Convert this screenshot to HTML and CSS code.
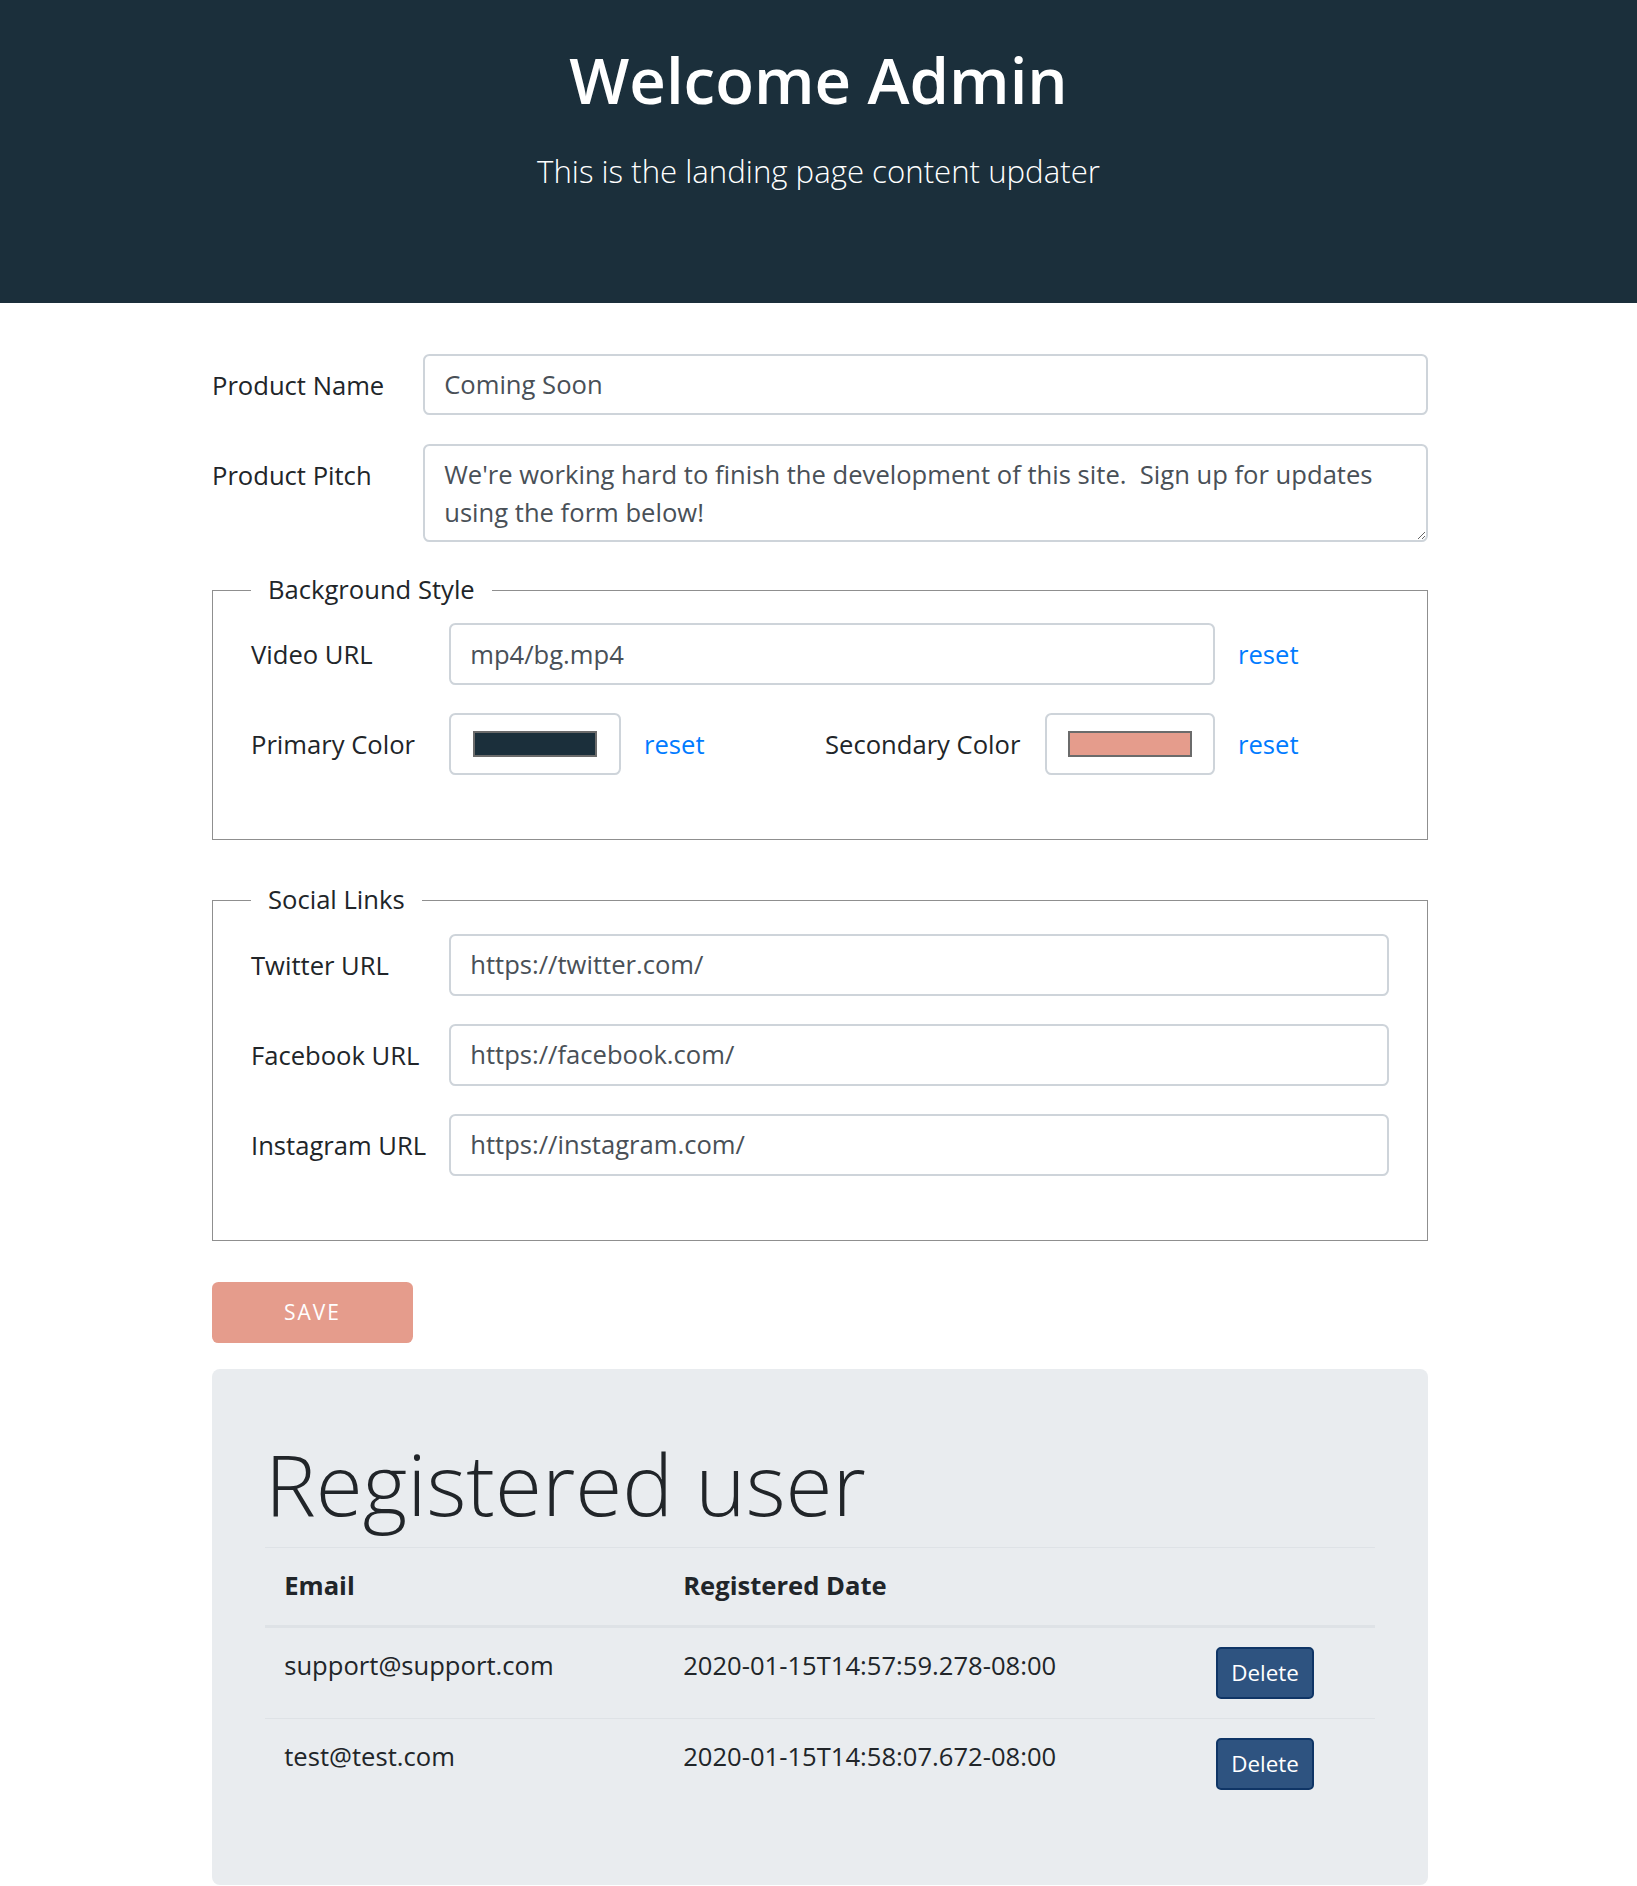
FILE: index.html
```html
<!DOCTYPE html>
<html lang="en">
<head>
<meta charset="utf-8">
<title>Admin</title>
<link rel="stylesheet" href="styles.css">
</head>
<body>
<header class="hero">
  <h1 class="hero-title">Welcome Admin</h1>
  <p class="hero-lead">This is the landing page content updater</p>
</header>
<main class="page">
  <form class="editor">
    <div class="form-row">
      <label class="form-label" for="name">Product Name</label>
      <input class="field" id="name" type="text" value="Coming Soon">
    </div>
    <div class="form-row">
      <label class="form-label" for="pitch">Product Pitch</label>
      <textarea class="field field-area" id="pitch" rows="2">We're working hard to finish the development of this site.  Sign up for updates using the form below!</textarea>
    </div>

    <fieldset class="group">
      <legend class="group-legend">Background Style</legend>
      <div class="bg-grid">
        <label class="form-label" for="video">Video URL</label>
        <input class="field field-tall span-video" id="video" type="text" value="mp4/bg.mp4">
        <a class="reset" href="#">reset</a>

        <span class="form-label">Primary Color</span>
        <div class="color-box"><span class="swatch swatch-primary"></span></div>
        <a class="reset" href="#">reset</a>
        <span class="form-label">Secondary Color</span>
        <div class="color-box"><span class="swatch swatch-secondary"></span></div>
        <a class="reset" href="#">reset</a>
      </div>
    </fieldset>

    <fieldset class="group">
      <legend class="group-legend">Social Links</legend>
      <div class="social-grid">
        <label class="form-label" for="tw">Twitter URL</label>
        <input class="field field-tall" id="tw" type="text" value="https://twitter.com/">
        <label class="form-label" for="fb">Facebook URL</label>
        <input class="field field-tall" id="fb" type="text" value="https://facebook.com/">
        <label class="form-label" for="ig">Instagram URL</label>
        <input class="field field-tall" id="ig" type="text" value="https://instagram.com/">
      </div>
    </fieldset>

    <button class="save" type="button">Save</button>
  </form>

  <section class="panel">
    <h2 class="panel-title">Registered user</h2>
    <table class="users">
      <colgroup>
        <col class="col-email">
        <col class="col-date">
        <col class="col-action">
      </colgroup>
      <thead>
        <tr><th>Email</th><th>Registered Date</th><th></th></tr>
      </thead>
      <tbody>
        <tr>
          <td>support@support.com</td>
          <td>2020-01-15T14:57:59.278-08:00</td>
          <td><button class="delete" type="button">Delete</button></td>
        </tr>
        <tr>
          <td>test@test.com</td>
          <td>2020-01-15T14:58:07.672-08:00</td>
          <td><button class="delete" type="button">Delete</button></td>
        </tr>
      </tbody>
    </table>
  </section>
</main>
</body>
</html>
```

FILE: styles.css
```css
* { box-sizing: border-box; }

html, body {
  margin: 0;
  padding: 0;
  background: #ffffff;
}

body {
  font-family: "Open Sans", "Noto Sans", "Liberation Sans", sans-serif;
  font-size: 25.6px;
  line-height: 1.5;
  color: #212529;
}

/* Header */
.hero {
  background: #1b2f3b;
  height: 303px;
  padding-top: 42px;
  text-align: center;
  color: #ffffff;
}

.hero-title {
  margin: 0;
  font-size: 63.5px;
  font-weight: 600;
  line-height: 1.2;
}

.hero-lead {
  margin: 30px 0 0;
  font-size: 31.2px;
  font-weight: 300;
  line-height: 1.5;
}

/* Page */
.page {
  width: 1216px;
  margin: 51px 0 0 calc(50% - 606.5px);
}

.form-row {
  display: grid;
  grid-template-columns: 211px 1fr;
  margin-bottom: 29px;
}

.form-label {
  padding-top: 13px;
  line-height: 38.4px;
  white-space: nowrap;
}

.field {
  display: block;
  width: 100%;
  height: 61px;
  padding: 9.6px 19.2px;
  font-family: inherit;
  font-size: 25.6px;
  line-height: 38.4px;
  color: #495057;
  background: #ffffff;
  border: 2px solid #ced4da;
  border-radius: 6.4px;
  outline: none;
}

.field-tall {
  height: 62px;
}

.field-area {
  height: 98px;
  resize: vertical;
  overflow: hidden;
}

/* Fieldsets */
.group {
  margin: 0 0 41px;
  padding: 14px 38px 64px;
  border: 1px solid #8f8f8f;
  min-width: 0;
}

.group-legend {
  padding: 0 17px;
  font-size: 25.6px;
  line-height: 38.4px;
}

.bg-grid {
  display: grid;
  grid-template-columns: 198px 172px 204px 220px 170px 1fr;
  row-gap: 28px;
}

.span-video {
  grid-column: 2 / 6;
}

.reset {
  padding-top: 13px;
  padding-left: 23px;
  line-height: 38.4px;
  color: #007bff;
  text-decoration: none;
  white-space: nowrap;
}

.color-box {
  height: 62px;
  border: 2px solid #ced4da;
  border-radius: 6.4px;
  background: #ffffff;
  display: flex;
  align-items: center;
  justify-content: center;
}

.swatch {
  display: block;
  width: 124px;
  height: 26px;
  border: 2px solid #6b6b6b;
}

.swatch-primary { background: #1b2f3b; }
.swatch-secondary { background: #e59c8c; }

.social-grid {
  display: grid;
  grid-template-columns: 198px 1fr;
  row-gap: 28px;
}

/* Save */
.save {
  display: block;
  width: 201px;
  height: 61px;
  border: none;
  border-radius: 6.4px;
  background: #e59c8c;
  color: #ffffff;
  font-family: inherit;
  font-size: 21px;
  letter-spacing: 2px;
  text-transform: uppercase;
  cursor: pointer;
}

/* Panel */
.panel {
  margin-top: 26px;
  padding: 62px 53px 51px;
  background: #e9ecef;
  border-radius: 8px;
}

.panel-title {
  margin: 0 0 12px;
  font-size: 85.5px;
  font-weight: 300;
  line-height: 1.22;
}

.users {
  width: 100%;
  border-collapse: collapse;
  table-layout: fixed;
  margin-bottom: 25.6px;
}

.col-email { width: 399px; }
.col-date { width: 533px; }
.col-action { width: 178px; }

.users th,
.users td {
  padding: 19.2px;
  text-align: left;
  line-height: 38.4px;
  border-top: 1px solid #dee2e6;
  vertical-align: top;
}

.users th {
  font-weight: 700;
  vertical-align: bottom;
  border-bottom: 3px solid #dee2e6;
}

.delete {
  padding: 7px 13px;
  font-family: inherit;
  font-size: 22.4px;
  line-height: 33.6px;
  color: #ffffff;
  background: #2e5380;
  border: 2px solid #0f3566;
  border-radius: 5px;
  cursor: pointer;
}
```
